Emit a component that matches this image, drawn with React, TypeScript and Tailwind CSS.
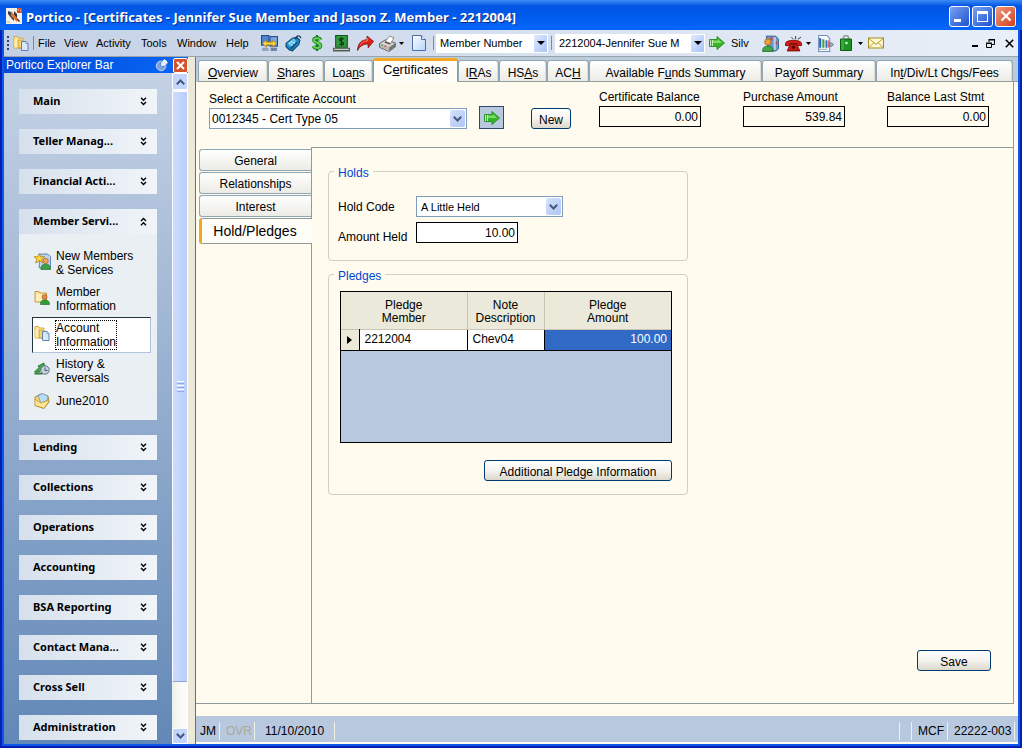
import React, { useState } from 'react';

interface TopTab {
  id: string;
  before: string;
  hot: string;
  after: string;
  width: string;
}

interface ServiceLink {
  label: string[];
  icon: React.ReactNode;
}

// hot = the underlined shortcut letter
const topTabs: TopTab[] = [
  { id: 'overview', before: '', hot: 'O', after: 'verview', width: 'w-[70px]' },
  { id: 'shares', before: '', hot: 'S', after: 'hares', width: 'w-[56px]' },
  { id: 'loans', before: 'Loa', hot: 'n', after: 's', width: 'w-[49px]' },
  { id: 'certificates', before: 'C', hot: 'e', after: 'rtificates', width: 'w-[85px]' },
  { id: 'iras', before: 'I', hot: 'R', after: 'As', width: 'w-[41px]' },
  { id: 'hsas', before: 'HS', hot: 'A', after: 's', width: 'w-[48px]' },
  { id: 'ach', before: 'AC', hot: 'H', after: '', width: 'w-[42px]' },
  { id: 'funds', before: 'Available F', hot: 'u', after: 'nds Summary', width: 'w-[173px]' },
  { id: 'payoff', before: 'Pa', hot: 'y', after: 'off Summary', width: 'w-[114px]' },
  { id: 'int', before: 'In', hot: 't', after: '/Div/Lt Chgs/Fees', width: 'w-[137px]' },
];

const sideTabs = ['General', 'Relationships', 'Interest', 'Hold/Pledges'];

const groupsAbove = ['Main', 'Teller Manag...', 'Financial Acti...'];
const groupsBelow = [
  'Lending',
  'Collections',
  'Operations',
  'Accounting',
  'BSA Reporting',
  'Contact Mana...',
  'Cross Sell',
  'Administration',
];

/* ---------- icons ---------- */

const Svg: React.FC<{ children: React.ReactNode; className?: string }> = ({ children, className = 'size-4' }) => (
  <svg viewBox="0 0 16 16" className={`${className} shrink-0`} aria-hidden="true">
    {children}
  </svg>
);

const AppIcon = () => (
  <Svg>
    <rect width="16" height="16" fill="#f4f1ea" />
    <path d="M11 0h5v5h-5z" fill="#d5552a" />
    <path d="M12 1h1v1h-1zM14 2h1v1h-1z" fill="#f6b48c" />
    <path d="M2 3l3 1 3 4v5l-2-2-4-5z" fill="#3b4350" />
    <path d="M8 3l3 3v4l3 3-1 1-5-5z" fill="#2d3642" />
    <path d="M5 3l6 7v4L5 8z" fill="#e9702c" />
    <path d="M1 13h3v2H1z" fill="#d6d1c5" />
  </Svg>
);

const FoldersIcon = () => (
  <Svg>
    <path d="M1 1.500h3.500L5.500 3H10v10H1z" fill="#ffe38c" stroke="#c99a3a" strokeWidth="0.8" />
    <path d="M1.500 4.500h8v8h-8z" fill="#fff0b5" />
    <path d="M5 5h4l1 1.500h3v6.500H5z" fill="#f8d368" stroke="#b98a32" strokeWidth="0.7" />
    <path d="M8.500 6.500h4.500l2 2v7H8.500z" fill="#d7e8fb" stroke="#5377ad" strokeWidth="0.9" />
    <path d="M13 6.500v2h2" fill="#fff" stroke="#5377ad" strokeWidth="0.7" />
  </Svg>
);

const SyncScreensIcon = () => (
  <Svg className="size-[17px]">
    <rect x="0.500" y="0.500" width="7" height="9" fill="#4e86d8" stroke="#274a87" />
    <rect x="8.500" y="1.500" width="7" height="9" fill="#79a9e8" stroke="#274a87" />
    <path d="M1 12h6v3H1z" fill="#8fa3be" />
    <path d="M9 12h6v3H9z" fill="#6e83a1" />
    <path d="M1.500 8L5 4.500v2.200h6V4.500L14.500 8 11 11.500V9.300H5v2.200z" fill="#ffd43c" stroke="#a07910" strokeWidth="0.7" />
  </Svg>
);

const TagIcon = () => (
  <Svg className="size-[17px]">
    <path d="M1 8l6-5 4-1 3 3-1 4-6 6-3-1-3-3z" fill="#2686c4" stroke="#0c4470" />
    <path d="M2 8l6-5 3 3-6 5z" fill="#5fc0e6" />
    <path d="M5 12l6-6 1 1-6 7z" fill="#0d588f" />
    <path d="M10 4c1-4 4-4 5-1" fill="none" stroke="#1c4461" strokeWidth="1.200" />
    <path d="M4 7l1 1M6 6l1 1M6 9l1 1M8 7l1 1" stroke="#e2f6ff" />
  </Svg>
);

const DollarIcon = () => (
  <Svg>
    <path d="M8 0v16" stroke="#14761e" strokeWidth="2" />
    <path d="M11.500 5C10.500 2.500 5 2.500 5 5.300S11.500 7.500 11.500 10.700 5.500 13.500 4.500 11" fill="none" stroke="#14761e" strokeWidth="3.600" />
    <path d="M11.500 5C10.500 2.500 5 2.500 5 5.300S11.500 7.500 11.500 10.700 5.500 13.500 4.500 11" fill="none" stroke="#5fd653" strokeWidth="2" />
  </Svg>
);

const CashIcon = () => (
  <Svg className="size-[17px]">
    <path d="M2.500 0.500h11v11h-11z" fill="#349a3e" stroke="#175322" />
    <path d="M10 4c-1-1-4-1-4 .5S10 6 10 8s-3 1.500-4 .5M8 2v8" fill="none" stroke="#0d3c14" strokeWidth="1.300" />
    <path d="M0 12h16v3.500H0z" fill="#4e5b4e" />
    <path d="M1 13h14v1H1z" fill="#d6dfd4" />
  </Svg>
);

const RedArrowIcon = () => (
  <Svg className="size-[17px]">
    <path d="M0.500 14.500C1 8 4 4.500 9.500 4.500V1L15.500 6l-5 6V8.500C6 8.500 3 10 0.500 14.500z" fill="#dd2118" stroke="#8b0d0a" strokeWidth="0.800" />
    <path d="M3 9.500c1-2 3-4 7-4V3" fill="none" stroke="#ff8f7c" strokeWidth="0.800" />
  </Svg>
);

const PrinterIcon = () => (
  <Svg className="size-[17px]">
    <path d="M0.500 8L6 4.500l9.500 3v3.500l-6 4.500-9-4z" fill="#d3d3cf" stroke="#5f5f5f" strokeWidth="0.900" />
    <path d="M6 6l4-5 4 1.500L11 8z" fill="#fff" stroke="#7a7a7a" strokeWidth="0.800" />
    <path d="M1 8.500l8.500 3v3.500L1 11z" fill="#bab9b4" />
    <path d="M9.500 11.500l6-4V11l-6 4z" fill="#77777a" />
    <path d="M5 7l1-1 5 2-1 1z" fill="#505258" />
    <rect x="5" y="10" width="2" height="1" fill="#d8302a" />
    <rect x="2" y="9" width="2" height="1" fill="#39a23e" />
  </Svg>
);

const PageIcon = () => (
  <Svg>
    <defs>
      <linearGradient id="pageFill" x1="0" y1="0" x2="1" y2="1">
        <stop offset="0" stopColor="#fff" />
        <stop offset="1" stopColor="#b4d3f7" />
      </linearGradient>
    </defs>
    <path d="M1.500 0.500h9l4 4v11h-13z" fill="url(#pageFill)" stroke="#4a6fa8" />
    <path d="M10.500 0.500v4h4" fill="#e9f3ff" stroke="#4a6fa8" />
  </Svg>
);

const GreenArrowIcon = () => (
  <Svg>
    <path d="M0.500 4.500h7.500V1.500L15.500 8 8 14.500V11.500H0.500z" fill="#36b52c" stroke="#2b8a25" strokeWidth="0.900" />
    <path d="M4 5.500h5V4l4 4H4z" fill="#7ddb66" />
    <path d="M1 5h1v6H1zM3 5h1v6H3z" fill="#c9efbd" />
  </Svg>
);

const PersonCardIcon = () => (
  <Svg className="size-[17px]">
    <path d="M4 1h9l2.500 3v9L13 15H6z" fill="#6d9bcb" stroke="#365b8c" strokeWidth="0.800" />
    <path d="M11 2h2v12h-2z" fill="#b8d3ee" />
    <path d="M8 2h2v3H8z" fill="#d7472d" />
    <circle cx="5.500" cy="6.500" r="3" fill="#f0a13c" stroke="#9b5a15" strokeWidth="0.700" />
    <path d="M0.500 15.500c0-4 2-5 5-5s5 1 5 5z" fill="#43a54a" stroke="#1b6524" strokeWidth="0.700" />
    <path d="M13 6h1v3h-1z" fill="#c03c28" />
  </Svg>
);

const PhoneIcon = () => (
  <Svg className="size-[17px]">
    <path d="M0.500 8c0-4 15-4 15 0v2h-4V8h-7v2h-4z" fill="#d51c16" stroke="#780b08" strokeWidth="0.800" />
    <path d="M5 8.500h6l3 6.500H2z" fill="#c71a14" stroke="#6e0906" strokeWidth="0.800" />
    <circle cx="8" cy="11.500" r="1.600" fill="#5d0805" />
    <path d="M8 4L6 2M10 4V1M12 4l3-2" stroke="#333" strokeWidth="0.900" />
  </Svg>
);

const ReportIcon = () => (
  <Svg className="size-[17px]">
    <path d="M1.500 0.500h8l2.500 3v12H1.500z" fill="#fafcff" stroke="#7390b8" />
    <path d="M2 3h2v9H2z" fill="#2b62c8" />
    <path d="M5 4h2v8H5z" fill="#3fa544" />
    <path d="M8 5h1.500v7H8z" fill="#2b62c8" />
    <path d="M2 13.500h8" stroke="#9aa" />
    <path d="M10 5h1v7h-1z" fill="#d7302a" />
    <path d="M11.500 7.500H14l1.500 1.500-1.500 1.500h-2.500z" fill="#a7b4c8" stroke="#4d5a73" strokeWidth="0.700" />
  </Svg>
);

const BagIcon = () => (
  <Svg>
    <path d="M5.500 5V2.500C5.500 0 10.500 0 10.500 2.500V5" fill="none" stroke="#9a9a9a" strokeWidth="1.500" />
    <path d="M2.500 4h11v11.500h-11z" fill="#1f9228" stroke="#0d5a15" />
    <path d="M3 4.500h3v10.500H3z" fill="#36ab38" />
    <circle cx="8.500" cy="8" r="1.300" fill="#cdeec6" />
  </Svg>
);

const EnvelopeIcon = () => (
  <Svg>
    <path d="M0.500 3h15v10h-15z" fill="#fff8d0" stroke="#a58a22" strokeWidth="1.200" />
    <path d="M1 3.500l7 6 7-6M1 12.500l5-5M15 12.500l-5-5" fill="none" stroke="#b59a34" />
  </Svg>
);

const NewMembersIcon = () => (
  <Svg className="size-[17px]">
    <path d="M5 1h8l2.500 2.500V14H5z" fill="#bcd5f3" stroke="#4c73ac" strokeWidth="0.800" />
    <circle cx="11" cy="7.500" r="2.500" fill="#eea35a" stroke="#a35a1c" strokeWidth="0.600" />
    <path d="M6.500 15.500c0-4 2-5 4.500-5s4.500 1 4.500 5z" fill="#3ba343" stroke="#1c6a26" strokeWidth="0.600" />
    <path d="M5 0.500l1.300 3H10L7.200 5.700 8.400 9.500 5 7.200 1.600 9.500l1-3.800L0 3.500h3.700z" fill="#ffd630" stroke="#a8781a" strokeWidth="0.700" />
  </Svg>
);

const MemberIcon = () => (
  <Svg>
    <path d="M1 2.500h4L6 4h6.500v9H1z" fill="#fde28e" stroke="#c2953a" strokeWidth="0.900" />
    <path d="M2 5h9v7H2z" fill="#fff0b8" />
    <circle cx="10.500" cy="8" r="2.500" fill="#e88a4e" stroke="#8e4a18" strokeWidth="0.600" />
    <path d="M6.500 15.500c0-4 2-4.500 4-4.500s5 .5 5 4.500z" fill="#339b3a" stroke="#19611f" strokeWidth="0.600" />
  </Svg>
);

const HistoryIcon = () => (
  <Svg>
    <path d="M0.500 11L5 6.500 4 5l6-3 1 5-2-.5L5 11z" fill="#43a948" stroke="#19682a" strokeWidth="0.800" />
    <path d="M0.500 11.500h8v2h-8z" fill="#2a8134" />
    <circle cx="11" cy="9" r="4.200" fill="#c9d3df" stroke="#5e6f86" />
    <path d="M11 6.500V9.500h2.500" fill="none" stroke="#3d5578" />
  </Svg>
);

const JuneIcon = () => (
  <Svg>
    <path d="M1 4l6-3 7 2 1 6-5 6.500-9-3z" fill="#fbd96b" stroke="#a97c22" strokeWidth="0.900" />
    <path d="M4 2.500L9 0.500l5 3-1 5-6 2z" fill="#b7dcf6" stroke="#5c8db8" strokeWidth="0.700" />
    <path d="M1.500 7L7 10l7-2-4 6.500-8.500-2.500z" fill="#ffe790" />
    <path d="M1.500 6.500L7 10l7-3" fill="none" stroke="#c19432" strokeWidth="0.800" />
  </Svg>
);

const PinIcon = () => (
  <Svg className="size-[14px]">
    <circle cx="7" cy="9" r="5.500" fill="#7fa2dd" stroke="#cfe0fb" />
    <path d="M6 8c0-4 3-6 6-6l2 2c0 4-2 6-6 6z" fill="#dfeafc" stroke="#3564b4" strokeWidth="0.800" />
    <path d="M10 2l4 4" stroke="#fff" strokeWidth="2" />
  </Svg>
);

const DoubleChevron: React.FC<{ up?: boolean }> = ({ up }) => (
  <svg viewBox="0 0 7 9" className={`w-[7px] h-[9px] shrink-0 ${up ? 'rotate-180' : ''}`} aria-hidden="true">
    <path d="M1 0.700L3.500 3.200 6 0.700M1 5L3.500 7.500 6 5" fill="none" stroke="#000" strokeWidth="1.400" />
  </svg>
);

const Chevron: React.FC<{ up?: boolean }> = ({ up }) => (
  <svg viewBox="0 0 9 6" className={`w-[9px] h-[6px] ${up ? 'rotate-180' : ''}`} aria-hidden="true">
    <path d="M0.800 0.800L4.500 4.500 8.200 0.800" fill="none" stroke="#43587e" strokeWidth="2" />
  </svg>
);

const Caret = () => (
  <svg viewBox="0 0 8 4" className="w-2 h-1 shrink-0" aria-hidden="true">
    <path d="M0 0h8L4 4z" fill="#000" />
  </svg>
);

const SmallCaret = () => (
  <svg viewBox="0 0 5 3" className="w-[5px] h-[3px] shrink-0" aria-hidden="true">
    <path d="M0 0h5L2.500 3z" fill="#000" />
  </svg>
);

/* ---------- small parts ---------- */

const serviceLinks: ServiceLink[] = [
  { label: ['New Members', '& Services'], icon: <NewMembersIcon /> },
  { label: ['Member', 'Information'], icon: <MemberIcon /> },
  { label: ['Account', 'Information'], icon: <FoldersIcon /> },
  { label: ['History &', 'Reversals'], icon: <HistoryIcon /> },
  { label: ['June2010'], icon: <JuneIcon /> },
];

const ToolSeparator: React.FC<{ className?: string }> = ({ className = '' }) => (
  <span className={`w-px h-3.5 bg-[#6a8ccb] shrink-0 ${className}`} />
);

const ToolButton: React.FC<{ label: string; className?: string; children: React.ReactNode }> = ({ label, className = '', children }) => (
  <button type="button" aria-label={label} className={`flex items-center shrink-0 ${className}`}>
    {children}
  </button>
);

const ToolSelect: React.FC<{ label: string; value: string; className: string }> = ({ label, value, className }) => (
  <div className={`relative h-[19px] shrink-0 ${className}`}>
    <select aria-label={label} className="appearance-none w-full h-full bg-white pl-1 pr-4 text-[11px] leading-[18px] outline-none">
      <option>{value}</option>
    </select>
    <span className="absolute right-px top-px bottom-px w-[13px] flex items-center justify-center bg-linear-to-br from-[#dfe9fd] to-[#a9c3f5] pointer-events-none">
      <Caret />
    </span>
  </div>
);

const FormSelect: React.FC<{ id: string; value: string; size: string; className: string }> = ({ id, value, size, className }) => (
  <div className={`relative h-[21px] shrink-0 ${className}`}>
    <select id={id} className={`appearance-none block w-full h-full bg-white border border-[#7f9db9] pr-5 leading-[18px] outline-none ${size}`}>
      <option>{value}</option>
    </select>
    <span className="absolute right-0.5 top-0.5 bottom-0.5 w-[15px] rounded-xs flex items-center justify-center bg-linear-to-br from-[#d5e1fd] to-[#b0c5f2] pointer-events-none">
      <Chevron />
    </span>
  </div>
);

const XpButton: React.FC<{ className?: string; children: React.ReactNode }> = ({ className = '', children }) => (
  <button
    type="button"
    className={`h-[21px] rounded-[3px] border border-[#003c74] bg-linear-to-b from-white via-[#f4f3ee] to-[#dcd8cc] pt-0.5 text-xs leading-4 shrink-0 ${className}`}
  >
    {children}
  </button>
);

const BalanceField: React.FC<{ id: string; label: string; value: string }> = ({ id, label, value }) => (
  <div className="w-[102px] shrink-0">
    <label htmlFor={id} className="block text-xs leading-4 whitespace-nowrap">{label}</label>
    <input
      id={id}
      readOnly
      defaultValue={value}
      className="block w-full h-[21px] mt-px border border-black bg-[#fffbef] pr-0.5 text-right text-xs outline-none"
    />
  </div>
);

const GroupHeader: React.FC<{ title: string; open?: boolean }> = ({ title, open }) => (
  <button
    type="button"
    aria-expanded={!!open}
    className="w-full h-[25px] flex items-center justify-between pl-3.5 pr-2.5 bg-linear-to-r from-[#d6e0ec] to-[#f1f5f9] font-['Noto_Sans','Open_Sans',sans-serif] text-[11px] font-bold"
  >
    {title}
    <DoubleChevron up={open} />
  </button>
);

const TitleBar = () => (
  <header className="h-[30px] shrink-0 flex items-center px-1.5 pt-0.5 bg-linear-to-b from-[#3c8cf5] via-[#0054e3] via-20% to-[#0366fb]">
    <AppIcon />
    <h1 className="flex-1 pl-1 pt-px font-['Open_Sans','Noto_Sans',sans-serif] text-[13px] leading-5 font-bold text-white whitespace-nowrap text-shadow-[1px_1px_0_#0b2a8a]">
      Portico - [Certificates - Jennifer Sue Member and Jason Z. Member - 2212004]
    </h1>
    <div className="flex gap-0.5">
      <button type="button" aria-label="Minimize" className="size-[21px] rounded-[3px] border border-white bg-linear-to-br from-[#7ba1f0] to-[#1c4fd0] flex items-end pl-1 pb-1">
        <span className="w-[7px] h-[3px] bg-white" />
      </button>
      <button type="button" aria-label="Maximize" className="size-[21px] rounded-[3px] border border-white bg-linear-to-br from-[#7ba1f0] to-[#1c4fd0] flex items-center justify-center">
        <span className="w-[11px] h-[11px] border border-t-[3px] border-white" />
      </button>
      <button type="button" aria-label="Close" className="size-[21px] rounded-[3px] border border-white bg-linear-to-br from-[#f0977c] to-[#cf3c10] flex items-center justify-center">
        <svg viewBox="0 0 12 12" className="size-3">
          <path d="M1.500 1.500l9 9M10.500 1.500l-9 9" stroke="#fff" strokeWidth="2.200" />
        </svg>
      </button>
    </div>
  </header>
);

const Toolbar = () => (
  <div className="h-[27px] shrink-0 flex items-center pl-[3px] pr-1 bg-linear-to-r from-[#c4d1e5] to-[#e9eff8] text-[11px] border-b border-[#9aa3a8]">
    <span className="flex flex-col gap-0.5 w-0.5 shrink-0">
      <span className="h-0.5 bg-[#27417c]" />
      <span className="h-0.5 bg-[#27417c]" />
      <span className="h-0.5 bg-[#27417c]" />
      <span className="h-0.5 bg-[#27417c]" />
    </span>
    <span className="ml-1"><FoldersIcon /></span>
    <ToolSeparator className="ml-1" />
    <nav className="flex shrink-0 pl-1" aria-label="Menu">
      <button type="button" className="w-[26px] text-left">File</button>
      <button type="button" className="w-8 text-left">View</button>
      <button type="button" className="w-[45px] text-left">Activity</button>
      <button type="button" className="w-9 text-left">Tools</button>
      <button type="button" className="w-[49px] text-left">Window</button>
      <button type="button" className="w-[35px] text-left">Help</button>
    </nav>
    <ToolButton label="Switch host"><SyncScreensIcon /></ToolButton>
    <ToolButton label="Rates" className="ml-[7px]"><TagIcon /></ToolButton>
    <ToolButton label="Transactions" className="ml-[7px]"><DollarIcon /></ToolButton>
    <ToolButton label="Cash" className="ml-2"><CashIcon /></ToolButton>
    <ToolButton label="Send" className="ml-[7px]"><RedArrowIcon /></ToolButton>
    <ToolButton label="Print" className="ml-[5px] gap-[3px]"><PrinterIcon /><SmallCaret /></ToolButton>
    <ToolButton label="New page" className="ml-[7px]"><PageIcon /></ToolButton>
    <ToolSeparator className="ml-1.5" />
    <ToolSelect label="Search by" value="Member Number" className="ml-0.5 w-[112px]" />
    <ToolSeparator className="ml-[3px]" />
    <ToolSelect label="Member" value="2212004-Jennifer Sue M" className="ml-[3px] w-[150px]" />
    <ToolButton label="Go" className="ml-1"><GreenArrowIcon /></ToolButton>
    <span className="ml-1.5 mr-[13px] shrink-0">Silv</span>
    <ToolButton label="Member card"><PersonCardIcon /></ToolButton>
    <ToolButton label="Calls" className="ml-1.5 gap-1"><PhoneIcon /><SmallCaret /></ToolButton>
    <ToolButton label="Reports" className="ml-1.5"><ReportIcon /></ToolButton>
    <ToolButton label="Sales" className="ml-1 gap-1"><BagIcon /><SmallCaret /></ToolButton>
    <ToolButton label="Mail" className="ml-[5px]"><EnvelopeIcon /></ToolButton>
    <div className="ml-auto flex items-center gap-2 shrink-0">
      <button type="button" aria-label="Minimize window" className="flex items-end w-1.5 h-2">
        <span className="w-1.5 h-0.5 bg-black" />
      </button>
      <button type="button" aria-label="Restore window">
        <svg viewBox="0 0 9 9" className="size-[9px]">
          <path d="M3 0.500h6M3 0v3M8.500 0v5.500H6" fill="none" stroke="#000" />
          <path d="M3 1h6" stroke="#000" />
          <path d="M0.500 4.500h5v4h-5zM0 4h6" fill="none" stroke="#000" />
        </svg>
      </button>
      <button type="button" aria-label="Close window" className="ml-0.5">
        <svg viewBox="0 0 9 9" className="size-[9px]">
          <path d="M0.800 0.800l7.400 7.400M8.200 0.800l-7.400 7.400" stroke="#000" strokeWidth="1.600" />
        </svg>
      </button>
    </div>
  </div>
);

const ExplorerBar = () => (
  <aside className="w-[184px] shrink-0 flex flex-col">
    <div className="h-4 shrink-0 flex items-center bg-linear-to-r from-[#0048d8] to-[#0a66f5] pl-0.5 text-white">
      <h2 className="flex-1 text-xs leading-4">Portico Explorer Bar</h2>
      <button type="button" aria-label="Pin"><PinIcon /></button>
      <button type="button" aria-label="Close bar" className="ml-1 size-[15px] rounded-xs border border-white bg-[#d4512c] flex items-center justify-center">
        <svg viewBox="0 0 9 9" className="size-[9px]">
          <path d="M1 1l7 7M8 1L1 8" stroke="#fff" strokeWidth="2" />
        </svg>
      </button>
    </div>

    <div className="flex-1 flex">
      <div className="flex-1 flex flex-col gap-[15px] px-[15px] pt-4 pb-[3px] bg-linear-to-b from-[#c5d2e5] to-[#6288b7]">
        {groupsAbove.map((title) => (
          <GroupHeader key={title} title={title} />
        ))}

        <section>
          <GroupHeader title="Member Servi..." open />
          <ul className="bg-[#eaeff3] pt-[11px] pb-[7px] pl-[13px] pr-1.5">
            {serviceLinks.map((link, i) => (
              <li key={link.label[0]}>
                <a
                  href="#"
                  className={`flex items-center gap-[5px] border py-[3px] text-xs leading-[14px] ${
                    i === 2 ? 'bg-white border-[#b0c4de] border-t-[#22343c] border-l-[#22343c]' : 'border-transparent'
                  }`}
                >
                  <span className={`w-[18px] flex justify-center ${link.label.length > 1 ? 'pb-1' : ''}`}>{link.icon}</span>
                  <span className={i === 2 ? 'outline outline-dotted outline-black' : ''}>
                    {link.label.map((line) => (
                      <span key={line} className="block">{line}</span>
                    ))}
                  </span>
                </a>
              </li>
            ))}
          </ul>
        </section>

        {groupsBelow.map((title) => (
          <GroupHeader key={title} title={title} />
        ))}
      </div>

      {/* scrollbar */}
      <div className="w-4 shrink-0 flex flex-col bg-linear-to-r from-[#f0f0ea] to-white">
        <button type="button" aria-label="Scroll up" className="h-[17px] rounded-xs border border-white bg-[#c4d5fd] flex items-center justify-center">
          <Chevron up />
        </button>
        <div className="grow-[590] basis-0 mt-px rounded-xs border border-white border-b-[#8aa5dc] bg-linear-to-r from-[#cddcfe] to-[#b9cdfa] flex flex-col items-center justify-center gap-px">
          <span className="w-[7px] h-px bg-white" />
          <span className="w-[7px] h-px bg-[#8cabf0]" />
          <span className="w-[7px] h-px bg-white" />
          <span className="w-[7px] h-px bg-[#8cabf0]" />
          <span className="w-[7px] h-px bg-white" />
          <span className="w-[7px] h-px bg-[#8cabf0]" />
        </div>
        <div className="grow-[46] basis-0" />
        <button type="button" aria-label="Scroll down" className="h-4 rounded-xs border border-white bg-[#c4d5fd] flex items-center justify-center">
          <Chevron />
        </button>
      </div>
    </div>
  </aside>
);

const HoldsBox = () => (
  <fieldset className="border border-[#d0d0bf] rounded-[4px] pl-[9px] pb-[17px]">
    <legend className="-ml-1 px-1 pt-1 text-xs leading-[14px] text-[#0046d5]">Holds</legend>
    <div className="flex items-center pt-4">
      <label htmlFor="holdCode" className="w-[78px] text-xs">Hold Code</label>
      <FormSelect id="holdCode" value="A Little Held" size="pl-1 text-[11px]" className="w-[147px]" />
    </div>
    <div className="flex items-end pt-[5px]">
      <label htmlFor="amountHeld" className="w-[78px] text-xs leading-3">Amount Held</label>
      <input id="amountHeld" defaultValue="10.00" className="w-[102px] h-[21px] border border-black bg-white pr-0.5 text-right text-xs outline-none" />
    </div>
  </fieldset>
);

const PledgesBox = () => (
  <fieldset className="mt-1 border border-[#d0d0bf] rounded-[4px] pl-[11px] pr-[15px] pb-[13px] flex flex-col">
    <legend className="-ml-1.5 px-1 pt-1 text-xs leading-[14px] text-[#0046d5]">Pledges</legend>
    <div className="mt-2 h-[152px] border border-black bg-[#b8c9df]">
      <table className="w-full table-fixed border-collapse text-xs leading-[13px]">
        <colgroup>
          <col className="w-[18px]" />
          <col className="w-[108px]" />
          <col className="w-[77px]" />
          <col />
        </colgroup>
        <thead>
          <tr className="h-[37px] bg-[#ebe9da] border-b border-[#c9c5b2]">
            <th colSpan={2} className="font-normal pt-1 border-r border-[#c7c5b2]">Pledge<br />Member</th>
            <th className="font-normal pt-1 border-r border-[#c7c5b2]">Note<br />Description</th>
            <th className="font-normal pt-1">Pledge<br />Amount</th>
          </tr>
        </thead>
        <tbody>
          <tr className="h-[21px] bg-white border-b border-black">
            <td className="bg-[#ebe9da] border-r border-black">
              <svg viewBox="0 0 5 8" className="ml-1.5 w-[5px] h-2" aria-hidden="true">
                <path d="M0 0l5 4-5 4z" fill="#000" />
              </svg>
            </td>
            <td className="pl-[5px] border-r border-black">2212004</td>
            <td className="pl-[5px] border-r border-black">Chev04</td>
            <td className="pr-1 text-right text-white bg-[#316ac5]">100.00</td>
          </tr>
        </tbody>
      </table>
    </div>
    <XpButton className="mt-[17px] w-[188px] self-end">Additional Pledge Information</XpButton>
  </fieldset>
);

const StatusBar = () => (
  <footer className="h-[26px] shrink-0 flex items-center bg-[#b8c9df] pl-1 text-xs pt-1">
    <span className="w-5 h-[18px] leading-[18px] border-r border-[#f2f1e6]">JM</span>
    <span className="w-[35px] h-[18px] leading-[18px] pl-1.5 text-[#aca899] border-r border-[#f2f1e6]">OVR</span>
    <span className="w-20 h-[18px] leading-[18px] pl-2.5 border-r border-[#f2f1e6]">11/10/2010</span>
    <span className="flex-1 h-[18px] border-r border-[#f2f1e6]" />
    <span className="w-3 h-[18px] border-r border-[#f2f1e6]" />
    <span className="w-9 h-[18px] leading-[18px] pl-1.5 border-r border-[#f2f1e6]">MCF</span>
    <span className="w-[67px] h-[18px] leading-[18px] pl-1.5 border-r border-[#f2f1e6]">22222-003</span>
    <span className="w-[3px]" />
  </footer>
);

const App: React.FC = () => {
  const [tab, setTab] = useState('certificates');
  const [sideTab, setSideTab] = useState('Hold/Pledges');

  return (
    <div className="min-h-screen flex flex-col bg-[#0a4fe0] font-['Liberation_Sans',Arial,sans-serif] text-black">
      <TitleBar />

      <div className="flex-1 flex flex-col border-x-2 border-b-2 border-[#0420b4]">
        <div className="flex-1 flex flex-col border-x-2 border-b-2 border-[#0f57ea]">
          <Toolbar />

          <div className="flex-1 flex bg-[#ece9d8]">
            <ExplorerBar />

            <main className="flex-1 min-w-0 ml-[7px] flex flex-col border-l border-[#716f64] bg-[#fffbef]">
              {/* Tabs */}
              <div role="tablist" className="h-[25px] shrink-0 flex items-end pl-0.5 bg-[#b9cbdc] text-xs">
                {topTabs.map((t) => (
                  <button
                    key={t.id}
                    type="button"
                    role="tab"
                    aria-selected={tab === t.id}
                    onClick={() => setTab(t.id)}
                    className={`shrink-0 whitespace-nowrap border-x rounded-t-[3px] ${t.width} ${
                      tab === t.id
                        ? 'h-6 border-t-[3px] border-t-[#f5a623] border-x-[#919b9c] bg-[#fffdf8] text-[13px] leading-4 pb-1'
                        : 'h-[22px] border-t border-[#91a7b4] bg-linear-to-b from-white to-[#ecebe5] leading-5 pt-0.5 border-b border-b-[#919b9c] shadow-[inset_-1px_0_0_#e0ded2]'
                    }`}
                  >
                    {t.before}<u>{t.hot}</u>{t.after}
                  </button>
                ))}
                <span className="flex-1 border-b border-[#919b9c]" />
              </div>

              <div className="flex-1 flex flex-col mr-1 mb-3 border-r border-b border-[#919b9c]">
                {/* Account selection */}
                <div className="h-[65px] shrink-0 flex items-end pl-[13px] pr-6 pb-[18px]">
                  <div className="w-[258px]">
                    <label htmlFor="certAccount" className="block text-xs leading-[18px]">Select a Certificate Account</label>
                    <FormSelect id="certAccount" value="0012345 - Cert Type 05" size="pl-0.5 text-xs" className="w-full" />
                  </div>
                  <button type="button" aria-label="Go to account" className="ml-3 w-[25px] h-[23px] border border-[#30476b] bg-[#b8c9df] flex items-center justify-center">
                    <GreenArrowIcon />
                  </button>
                  <XpButton className="ml-[27px] w-10">New</XpButton>
                  <div className="flex-1 flex justify-end gap-[42px] pb-0.5">
                    <BalanceField id="certBalance" label="Certificate Balance" value="0.00" />
                    <BalanceField id="purchaseAmount" label="Purchase Amount" value="539.84" />
                    <BalanceField id="lastStmt" label="Balance Last Stmt" value="0.00" />
                  </div>
                </div>

                <div className="flex-1 flex">
                  {/* Side tabs */}
                  <div role="tablist" aria-orientation="vertical" className="w-[115px] shrink-0 flex flex-col pl-[3px] pt-0.5">
                    {sideTabs.map((name) => (
                      <button
                        key={name}
                        type="button"
                        role="tab"
                        aria-selected={sideTab === name}
                        onClick={() => setSideTab(name)}
                        className={
                          sideTab === name
                            ? 'relative z-10 -mr-px h-[26px] border-y border-[#919b9c] border-l-[3px] border-l-[#f5a623] rounded-l-[3px] bg-[#fffdf8] pr-1 text-sm leading-5'
                            : 'mb-px h-[22px] border border-r-0 border-[#91a7b4] rounded-l-[3px] bg-linear-to-b from-white to-[#ecebe5] pt-0.5 text-xs'
                        }
                      >
                        {name}
                      </button>
                    ))}
                  </div>

                  <section className="flex-1 flex flex-col border-t border-l border-[#919b9c] pl-4 pt-[14px] pr-[22px] pb-8">
                    <div className="w-[360px]">
                      <HoldsBox />
                      <PledgesBox />
                    </div>
                    <XpButton className="mt-auto ml-auto w-[74px]">Save</XpButton>
                  </section>
                </div>
              </div>

              <StatusBar />
              <div className="h-0.5 shrink-0 bg-[#fffbef]" />
            </main>
          </div>
        </div>
      </div>
    </div>
  );
};

export default App;
